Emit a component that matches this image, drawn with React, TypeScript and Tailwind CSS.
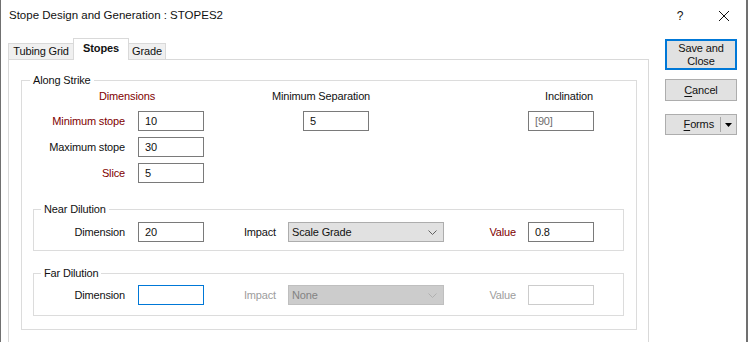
import React from "react";

const maroon = "text-[#800000]";

const Box = ({
  value = "",
  className = "",
}: {
  value?: string;
  className?: string;
}) => (
  <div
    className={`w-[66px] h-[20px] border bg-white pl-[6px] flex items-center shrink-0 ${
      className || "border-[#7a7a7a]"
    }`}
  >
    {value}
  </div>
);

const Chevron = ({ color }: { color: string }) => (
  <svg width="9" height="5" viewBox="0 0 9 5" className="ml-auto mr-[6px]">
    <path d="M0.5 0.5 L4.5 4.5 L8.5 0.5" fill="none" stroke={color} strokeWidth="1" />
  </svg>
);

const Group = ({
  title,
  className,
  legendClass,
  children,
}: {
  title: string;
  className: string;
  legendClass: string;
  children: React.ReactNode;
}) => (
  <fieldset className={`border border-[#dcdcdc] ${className}`}>
    <legend className={`leading-[14px] px-[3px] ${legendClass}`}>{title}</legend>
    {children}
  </fieldset>
);

export default function App() {
  return (
    <div className="w-[748px] h-[342px] overflow-hidden bg-white border-l border-l-[#707070] border-r-2 border-r-[#707070] font-['Liberation_Sans',Arial,sans-serif] text-[11px] text-[#111] tracking-[-0.15px]">
      {/* title bar */}
      <div className="flex items-center h-[32px] pl-[8px]">
        <span className="text-[11.5px] tracking-normal">Stope Design and Generation : STOPES2</span>
        <span className="ml-auto w-[12px] text-center text-[12px]">?</span>
        <svg width="10" height="10" viewBox="0 0 10 10" className="ml-[33px] mr-[17px]">
          <path d="M0 0 L10 10 M10 0 L0 10" stroke="#111" strokeWidth="1" />
        </svg>
      </div>

      <div className="flex pl-[7px] pt-[6px]">
        {/* tab area */}
        <div className="w-[641px] flex flex-col">
          <div className="flex items-end h-[21px]">
            <div className="w-[65px] h-[16px] bg-[#f0f0f0] border-l border-t border-[#d9d9d9] flex items-center justify-center">
              Tubing Grid
            </div>
            <div className="relative z-10 w-[56px] h-[22px] -mb-px bg-white border-l border-t border-r border-[#d9d9d9] flex items-center justify-center pb-[2px] font-bold">
              Stopes
            </div>
            <div className="w-[37px] h-[16px] bg-[#f0f0f0] border-t border-r border-[#d9d9d9] flex items-center justify-center">
              Grade
            </div>
          </div>

          {/* tab page */}
          <div className="h-[300px] border border-[#d9d9d9] pl-[12px] pt-[13px]">
            <Group title="Along Strike" className="w-[616px] pb-[13px]" legendClass="ml-[8px]">
              {/* column headers */}
              <div className="flex items-center h-[18px]">
                <div className={`ml-[28px] w-[154px] text-center ${maroon}`}>Dimensions</div>
                <div className="w-[234px] text-center">Minimum Separation</div>
                <div className="ml-[66px] w-[130px] text-center">Inclination</div>
              </div>

              <div className="flex flex-col gap-[6px] mt-[6px]">
                <div className="flex items-center">
                  <div className={`w-[103px] text-right ${maroon}`}>Minimum stope</div>
                  <div className="ml-[13px]">
                    <Box value="10" />
                  </div>
                  <div className="ml-[99px]">
                    <Box value="5" />
                  </div>
                  <div className="ml-[159px] text-[#6d6d6d]">
                    <Box value="[90]" />
                  </div>
                </div>
                <div className="flex items-center">
                  <div className="w-[103px] text-right">Maximum stope</div>
                  <div className="ml-[13px]">
                    <Box value="30" />
                  </div>
                </div>
                <div className="flex items-center">
                  <div className={`w-[103px] text-right ${maroon}`}>Slice</div>
                  <div className="ml-[13px]">
                    <Box value="5" />
                  </div>
                </div>
              </div>

              {/* near dilution */}
              <Group
                title="Near Dilution"
                className="ml-[11px] mt-[19px] w-[591px] pt-[6px] pb-[8px]"
                legendClass="ml-[7px]"
              >
                <div className="flex items-center">
                  <div className="w-[91px] text-right">Dimension</div>
                  <div className="ml-[13px]">
                    <Box value="20" />
                  </div>
                  <div className="ml-[12px] w-[60px] text-right">Impact</div>
                  <div className="ml-[12px] w-[156px] h-[20px] bg-[#e1e1e1] border border-[#adadad] pl-[3px] flex items-center">
                    Scale Grade
                    <Chevron color="#606060" />
                  </div>
                  <div className={`w-[72px] text-right ${maroon}`}>Value</div>
                  <div className="ml-[12px]">
                    <Box value="0.8" />
                  </div>
                </div>
              </Group>

              {/* far dilution */}
              <Group
                title="Far Dilution"
                className="ml-[11px] mt-[15px] w-[591px] pt-[5px] pb-[10px]"
                legendClass="ml-[7px]"
              >
                <div className="flex items-center">
                  <div className="w-[91px] text-right">Dimension</div>
                  <div className="ml-[13px]">
                    <Box className="border-[#0078d7]" />
                  </div>
                  <div className="ml-[12px] w-[60px] text-right text-[#9d9d9d]">Impact</div>
                  <div className="ml-[12px] w-[156px] h-[20px] bg-[#cccccc] border border-[#bfbfbf] pl-[3px] flex items-center text-[#838383]">
                    None
                    <Chevron color="#b0b0b0" />
                  </div>
                  <div className="w-[72px] text-right text-[#9d9d9d]">Value</div>
                  <div className="ml-[12px]">
                    <Box className="border-[#cccccc]" />
                  </div>
                </div>
              </Group>
            </Group>
          </div>
        </div>

        {/* buttons */}
        <div className="ml-[16px] w-[72px] flex flex-col">
          <button className="mt-[1px] h-[31px] border-2 border-[#0078d7] bg-[#e1e1e1] leading-[13px] text-center">
            Save and
            <br />
            Close
          </button>
          <button className="mt-[9px] h-[22px] border border-[#adadad] bg-[#e1e1e1] text-center">
            <u className="underline-offset-[2px]">C</u>ancel
          </button>
          <div className="mt-[13px] h-[21px] border border-[#adadad] bg-[#e1e1e1] flex items-center">
            <div className="flex-1 text-right pr-[6px]">
              <u className="underline-offset-[2px]">F</u>orms
            </div>
            <div className="w-px h-[15px] bg-[#a8a8a8]" />
            <div className="w-[15px] flex items-center justify-center">
              <svg width="7" height="4" viewBox="0 0 7 4">
                <path d="M0 0 L7 0 L3.5 4 Z" fill="#000" />
              </svg>
            </div>
          </div>
        </div>
      </div>
    </div>
  );
}
